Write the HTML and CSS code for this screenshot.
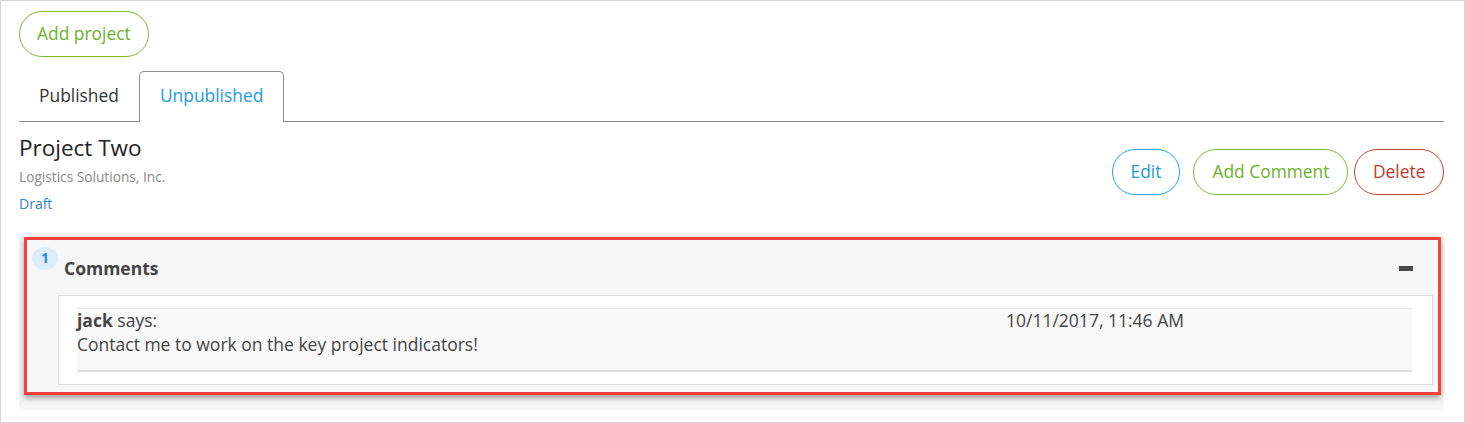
FILE: index.html
```html
<!DOCTYPE html>
<html>
<head>
<meta charset="utf-8">
<link rel="stylesheet" href="styles.css">
</head>
<body>
<div class="frame">
  <button class="btn btn-green btn-add">Add project</button>
  <div class="tabs">
    <div class="tab">Published</div>
    <div class="tab active">Unpublished</div>
  </div>
  <div class="project">
    <div class="project-info">
      <div class="title">Project Two</div>
      <div class="company">Logistics Solutions, Inc.</div>
      <div class="status">Draft</div>
    </div>
    <div class="actions">
      <button class="btn btn-blue">Edit</button>
      <button class="btn btn-green btn-comment">Add Comment</button>
      <button class="btn btn-red">Delete</button>
    </div>
  </div>
  <div class="comments-wrap">
    <div class="comments">
      <div class="comments-head">
        <span class="badge">1</span>
        <span class="comments-title">Comments</span>
        <span class="collapse"></span>
      </div>
      <div class="comments-body">
        <div class="comment">
          <div class="author"><b>jack</b> says:</div>
          <div class="date">10/11/2017, 11:46 AM</div>
          <div class="text">Contact me to work on the key project indicators!</div>
        </div>
      </div>
    </div>
  </div>
</div>
</body>
</html>
```
FILE: styles.css
```css
* { box-sizing: border-box; }
html, body { margin: 0; padding: 0; background: #fff; }
body { font-family: "Open Sans", "Liberation Sans", sans-serif; color: #333; }

.frame {
  width: 1465px;
  height: 423px;
  border: 1px solid #d6d6d6;
  padding: 10px 20px 0 18px;
}

.btn {
  font-family: "Open Sans", "Liberation Sans", sans-serif;
  font-size: 17.4px;
  line-height: 22px;
  height: 46px;
  padding: 0 17px 3px;
  border-radius: 23px;
  background: #fff;
  border: 1px solid;
  cursor: pointer;
}
.btn-green { color: #6cb22a; border-color: #7cbb33; }
.btn-blue { color: #1a9ae0; border-color: #2aa3e3; }
.btn-red { color: #c0392b; border-color: #c4423a; }

.btn-add { display: block; }

.tabs {
  display: flex;
  margin-top: 14px;
  border-bottom: 1px solid #8a8a8a;
}
.tab {
  height: 50px;
  padding: 0 20px;
  font-size: 17.4px;
  line-height: 48px;
  color: #333;
}
.tab.active {
  color: #1d9be0;
  border: 1px solid #8f8f8f;
  border-bottom: none;
  border-radius: 5px 5px 0 0;
  background: #fff;
  margin-bottom: -1px;
  height: 51px;
  padding: 0 20px;
  line-height: 47px;
}

.project {
  display: flex;
  justify-content: space-between;
  align-items: flex-start;
  margin-top: 12px;
}
.title { font-size: 22.5px; line-height: 28px; color: #222; }
.company { font-size: 13.7px; line-height: 20px; color: #8a8a8a; margin-top: 5px; }
.status { font-size: 14px; line-height: 20px; color: #2a86d4; margin-top: 7px; }

.actions { display: flex; margin-top: 15px; }
.btn-blue { padding-left: 18px; padding-right: 18px; }
.btn-comment { margin-left: 13px; margin-right: 6px; padding-left: 18px; padding-right: 18px; }
.btn-red { padding-left: 17.5px; padding-right: 17.5px; }

.comments-wrap {
  margin-top: 18px;
  background: #f6f6f6;
  border-radius: 6px;
  padding: 5px 3px 15px 5px;
}
.comments {
  border: 3px solid #f24040;
  background: #f7f7f7;
  box-shadow: 0 3px 6px rgba(0,0,0,0.35);
  padding: 0 5px 7px 31px;
}
.comments-head {
  height: 55px;
  display: flex;
  align-items: center;
  position: relative;
}
.badge {
  position: absolute;
  left: -26px;
  top: 7px;
  width: 26px;
  height: 23px;
  border-radius: 50%;
  background: #dbeefb;
  color: #2a86d4;
  font-weight: 700;
  font-size: 14px;
  line-height: 21px;
  text-align: center;
}
.comments-title {
  font-weight: 700;
  font-size: 17.5px;
  color: #444;
  margin-left: 6px;
}
.collapse {
  margin-left: auto;
  margin-right: 20px;
  width: 14px;
  height: 5px;
  background: #4a4a4a;
  margin-top: 2px;
}
.comments-body {
  background: #fff;
  border: 1px solid #dcdcdc;
  padding: 12px 20px 12px 18px;
}
.comment {
  display: grid;
  grid-template-columns: 929px 1fr;
  background: #f8f8f8;
  border-top: 1px solid #e6e6e6;
  border-bottom: 2px solid #dedede;
  padding: 0 0 14px 0;
  font-size: 17.5px;
  line-height: 24px;
  color: #444;
}
.author, .date { margin-top: -1px; }
.author b { color: #444; }
.date { color: #444; }
.text { grid-column: 1 / 3; }
```
